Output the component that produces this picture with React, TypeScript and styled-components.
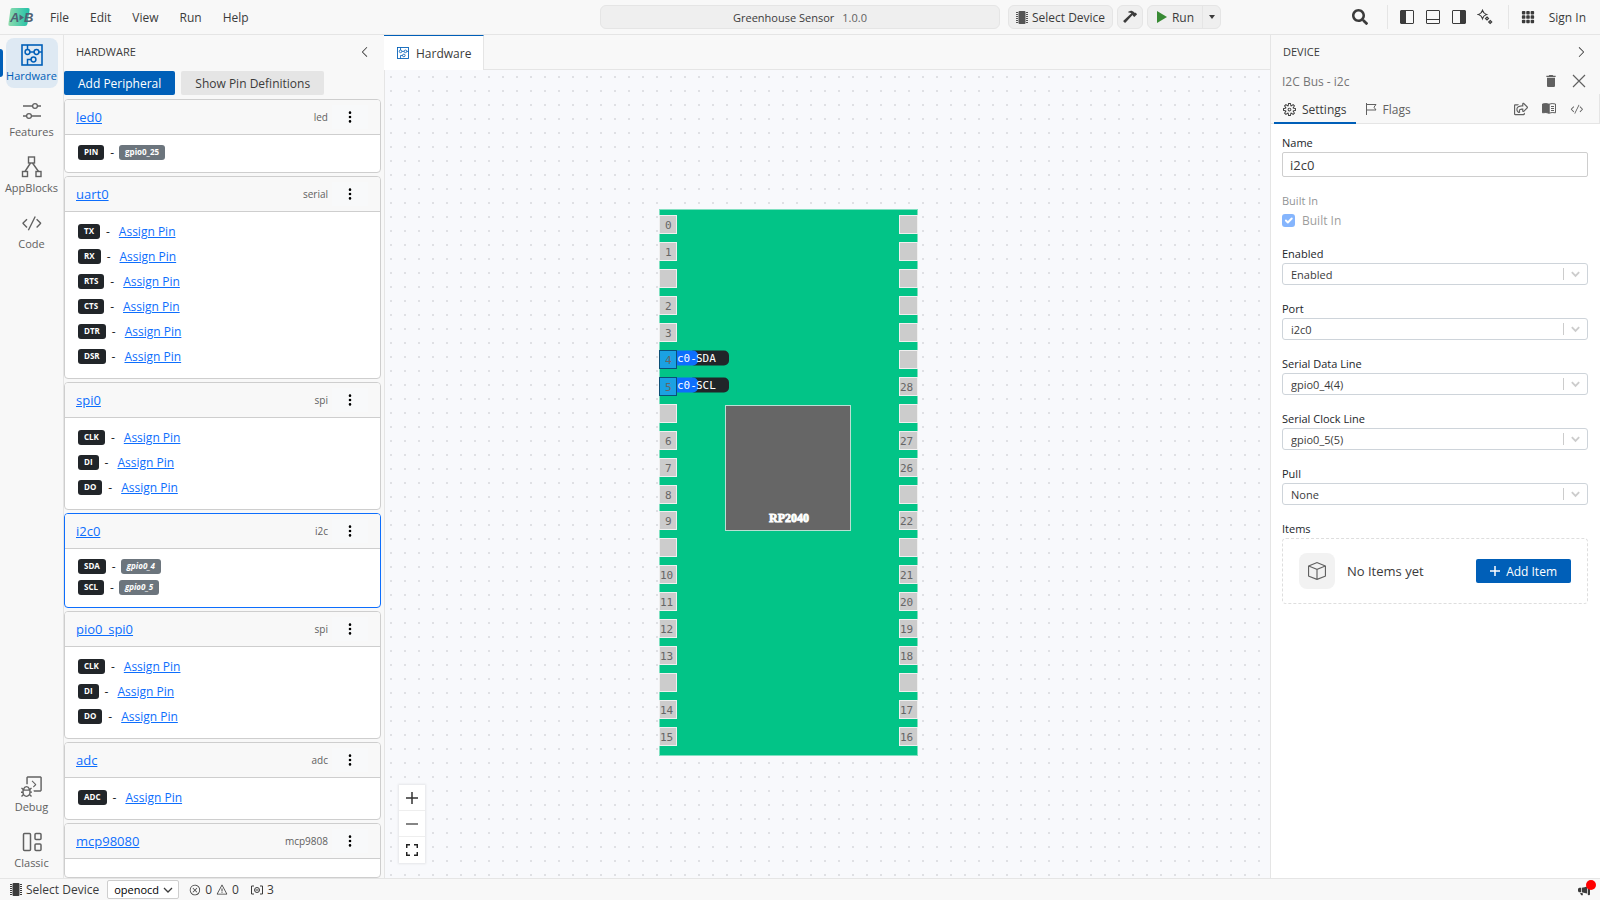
import React from "react";
import styled, { createGlobalStyle, css } from "styled-components";
import {
  VscLayoutSidebarLeft,
  VscLayoutSidebarRight,
  VscChevronLeft,
  VscChevronRight,
  VscCode,
  VscSettingsGear,
  VscError,
  VscWarning,
  VscDebugConsole,
} from "react-icons/vsc";
import { FaSearch, FaRegShareSquare } from "react-icons/fa";
import { BsHammer, BsThreeDotsVertical, BsGrid3X3GapFill, BsBox, BsMegaphoneFill } from "react-icons/bs";
import { MdDelete } from "react-icons/md";

const c = {
  chrome: "#f8f8f8",
  line: "#e5e5e5",
  text: "#3b3b3b",
  muted: "#616161",
  accent: "#005fb8",
  link: "#0d6efd",
  card: "#cecece",
};

const Global = createGlobalStyle`
  * { box-sizing: border-box; }
  html, body { margin: 0; height: 100%; }
  body { font-family: "Open Sans", "Noto Sans", sans-serif; font-size: 12px; color: ${c.text}; overflow: hidden; }
  button, input, select { font: inherit; color: inherit; margin: 0; }
  svg { display: block; flex: none; }
`;

const Page = styled.div`
  height: 100vh;
  display: grid;
  grid-template-rows: 35px minmax(0, 1fr) 22px;
  background: ${c.chrome};
`;

const PlainButton = styled.button`
  border: 0;
  background: none;
  padding: 0;
  display: flex;
  align-items: center;
  justify-content: center;
  white-space: nowrap;
`;

/* top bar */
const TopBar = styled.header`
  display: grid;
  grid-template-columns: 1fr 25% 1fr;
  align-items: center;
  border-bottom: 1px solid ${c.line};
`;
const TopSide = styled.div`
  display: flex;
  align-items: center;
  height: 24px;
`;
const Logo = styled.svg`
  margin-left: 8px;
  margin-right: 6px;
`;
const MenuButton = styled(PlainButton)`
  padding: 0 10px;
  margin-right: 1px;
  height: 24px;
`;
const TitleBox = styled.button`
  height: 24px;
  border: 1px solid ${c.line};
  border-radius: 6px;
  background: #efefef;
  display: flex;
  align-items: center;
  justify-content: center;
  gap: 8px;
  padding: 0 8px;
  font-size: 11px;
  span {
    color: ${c.muted};
  }
`;
const ToolGroup = styled.div`
  display: flex;
  height: 24px;
  margin-left: 8px;
  border: 1px solid ${c.line};
  border-radius: 6px;
  background: #efefef;
  & + & {
    margin-left: 4px;
  }
`;
const ToolButton = styled(PlainButton)<{ $w: number; $divided?: boolean }>`
  width: ${(p) => p.$w}px;
  gap: 4px;
  ${(p) =>
    p.$divided &&
    css`
      border-left: 1px solid ${c.line};
    `}
`;
const FlippedHammer = styled(BsHammer)`
  transform: scaleX(-1);
`;
const Spacer = styled.div`
  flex: 1;
`;
const IconButton = styled(PlainButton)`
  width: 26px;
  height: 24px;
`;
const SearchButton = styled(IconButton)`
  margin-right: 4px;
`;
const TopDivider = styled.span`
  width: 1px;
  height: 24px;
  background: ${c.line};
  margin: 0 6px 0 10px;
`;
const SignIn = styled(PlainButton)`
  padding: 0 14px 0 8px;
`;

/* workspace */
const Workspace = styled.div`
  display: grid;
  grid-template-columns: 64px 320px minmax(0, 1fr) 330px;
  min-height: 0;
`;
const Activity = styled.nav`
  display: flex;
  flex-direction: column;
  align-items: center;
  gap: 6px;
  padding: 3px 0;
  border-right: 1px solid ${c.line};
`;
const ActivityItem = styled(PlainButton)<{ $active?: boolean }>`
  position: relative;
  width: 52px;
  height: 50px;
  flex-direction: column;
  justify-content: flex-start;
  padding-top: 6px;
  gap: 1px;
  font-size: 11px;
  line-height: 18px;
  border-radius: 8px;
  color: ${c.muted};
  ${(p) =>
    p.$active &&
    css`
      color: ${c.accent};
      background: #dee9f3;
      &::before {
        content: "";
        position: absolute;
        left: -6px;
        top: 11px;
        width: 3px;
        height: 28px;
        border-radius: 0 3px 3px 0;
        background: ${c.accent};
      }
    `}
`;

const Side = styled.section`
  display: flex;
  flex-direction: column;
  min-height: 0;
`;
const PanelTitle = styled.h2`
  margin: 0;
  display: flex;
  align-items: center;
  justify-content: space-between;
  height: 35px;
  padding: 0 11px 2px 12px;
  font-size: 11px;
  font-weight: 400;
`;
const ButtonRow = styled.div`
  display: flex;
  gap: 6px;
  padding-top: 1px;
  margin-bottom: 4px;
`;
const Action = styled.button<{ $primary?: boolean }>`
  height: 24px;
  border: 0;
  border-radius: 2px;
  padding: 0 14px;
  display: flex;
  align-items: center;
  justify-content: center;
  gap: 6px;
  white-space: nowrap;
  font-size: 12px;
  background: ${(p) => (p.$primary ? c.accent : "#e5e5e5")};
  color: ${(p) => (p.$primary ? "#fff" : c.text)};
`;
const CardList = styled.div`
  flex: 1;
  min-height: 0;
  overflow: hidden;
  display: flex;
  flex-direction: column;
  gap: 3px;
  padding-right: 3px;
`;
const Card = styled.article<{ $selected?: boolean; $last?: boolean }>`
  border: 1px solid ${(p) => (p.$selected ? c.link : c.card)};
  border-radius: 4px;
  background: #fff;
  overflow: hidden;
  flex: ${(p) => (p.$last ? "1 1 0" : "none")};
`;
const CardHead = styled.div`
  display: flex;
  align-items: center;
  height: 35px;
  padding: 0 12px 0 11px;
  background: ${c.chrome};
  border-bottom: 1px solid ${c.card};
`;
const Name = styled.a`
  flex: 1;
  font-size: 13px;
  color: ${c.link};
`;
const Kind = styled.span`
  font-size: 10px;
  color: ${c.muted};
`;
const Kebab = styled(PlainButton)`
  width: 36px;
  height: 24px;
  margin-left: 4px;
  background: #f8f9fa;
  color: #000;
`;
const PinList = styled.ul`
  list-style: none;
  margin: 0;
  padding: 7px 13px 10px;
  display: grid;
  gap: 1px;
`;
const PinRow = styled.li<{ $assigned: boolean }>`
  display: flex;
  align-items: center;
  height: ${(p) => (p.$assigned ? 20 : 24)}px;
  gap: 5px;
  color: #212529;
`;
const Badge = styled.span<{ $tone: "dark" | "grey"; $italic?: boolean }>`
  height: 15px;
  line-height: 14px;
  padding: 0 6px;
  border-radius: 3px;
  font-size: 8px;
  font-weight: 700;
  font-style: ${(p) => (p.$italic ? "italic" : "normal")};
  color: #fff;
  background: ${(p) => (p.$tone === "dark" ? "#212529" : "#6c757d")};
`;
const Dash = styled.span`
  margin-left: 1px;
`;
const AssignLink = styled.a`
  margin-left: 4px;
  font-size: 12px;
  color: ${c.link};
`;

/* editor */
const Editor = styled.main`
  display: flex;
  flex-direction: column;
  min-width: 0;
`;
const TabBar = styled.div`
  display: flex;
  height: 35px;
  border-bottom: 1px solid ${c.line};
`;
const Tab = styled.button`
  display: flex;
  align-items: center;
  gap: 7px;
  height: 35px;
  padding: 0 12px 0 13px;
  border: 0;
  border-top: 1px solid ${c.accent};
  border-right: 1px solid ${c.line};
  background: #fff;
  font-size: 12px;
  color: ${c.text};
  svg {
    color: ${c.accent};
  }
`;
const Canvas = styled.div`
  position: relative;
  flex: 1;
  overflow: hidden;
  border-left: 1px solid ${c.line};
  background-color: #f8f9fc;
  background-image: radial-gradient(circle, #dfe0e4 1px, transparent 1px);
  background-size: 14px 14px;
  background-position: -1px 0;
`;
const Board = styled.svg`
  position: absolute;
  left: 274px;
  top: 139px;
`;
const ZoomBar = styled.div`
  position: absolute;
  left: 14px;
  bottom: 15px;
  display: grid;
  background: #fff;
  box-shadow: 0 0 2px 1px rgba(0, 0, 0, 0.08);
`;
const ZoomButton = styled(PlainButton)`
  width: 26px;
  height: 26px;
  border-bottom: 1px solid #eee;
  &:last-child {
    border-bottom: 0;
  }
`;

/* device panel */
const Device = styled.aside`
  border-left: 1px solid ${c.line};
  background: #fff;
`;
const DeviceTop = styled.div`
  background: ${c.chrome};
  border-bottom: 1px solid ${c.line};
`;
const DeviceLine = styled.div`
  display: flex;
  align-items: center;
  height: 24px;
  padding: 0 7px 2px 11px;
  color: #767676;
`;
const DeviceTabs = styled.div`
  display: flex;
  height: 29px;
  padding: 0 8px 0 3px;
  border-right: 1px solid ${c.line};
`;
const DeviceTab = styled(PlainButton)<{ $active?: boolean }>`
  height: 30px;
  gap: 6px;
  padding: 2px 9px 0;
  color: ${(p) => (p.$active ? c.text : c.muted)};
  border-bottom: 2px solid ${(p) => (p.$active ? c.accent : "transparent")};
`;
const SmallIcon = styled(PlainButton)`
  width: 28px;
  height: 29px;
  color: ${c.muted};
`;
const Form = styled.form`
  padding: 10px 12px 10px 11px;
  display: grid;
  gap: 15px;
`;
const Field = styled.div<{ $disabled?: boolean }>`
  display: grid;
  opacity: ${(p) => (p.$disabled ? 0.5 : 1)};
`;
const label = css`
  font-size: 11px;
  line-height: 18px;
  color: #212529;
`;
const Label = styled.label`
  ${label}
`;
const GroupTitle = styled.span`
  ${label}
`;
const TextInput = styled.input`
  height: 25px;
  border: 1px solid ${c.card};
  border-radius: 2px;
  padding: 0 7px;
  background: #fff;
  font-size: 13px;
  width: 100%;
`;
const CheckLine = styled.label`
  display: flex;
  align-items: center;
  gap: 7px;
  height: 20px;
  font-size: 12px;
`;
const Check = styled.input`
  appearance: none;
  width: 13px;
  height: 13px;
  border-radius: 3px;
  background: ${c.link}
    url("data:image/svg+xml,%3Csvg xmlns='http://www.w3.org/2000/svg' viewBox='0 0 20 20'%3E%3Cpath fill='none' stroke='%23fff' stroke-width='3' stroke-linecap='round' stroke-linejoin='round' d='m6 10 3 3 6-6'/%3E%3C/svg%3E");
`;
const SelectBox = styled.div`
  display: flex;
  align-items: center;
  height: 22px;
  border: 1px solid #ced4da;
  border-radius: 3px;
  background: #fff;
  padding-right: 6px;
  select {
    flex: 1;
    height: 20px;
    appearance: none;
    border: 0;
    background: none;
    padding: 0 8px;
    font-size: 11px;
    color: ${c.text};
  }
  svg {
    border-left: 1px solid #ccc;
    padding-left: 6px;
    color: #ccc;
  }
`;
const Empty = styled.div`
  display: flex;
  align-items: center;
  gap: 12px;
  height: 66px;
  padding: 0 16px;
  border: 1px dashed #dedede;
  border-radius: 4px;
  font-size: 13px;
  > span {
    flex: 1;
  }
`;
const Tile = styled.div`
  width: 36px;
  height: 36px;
  border-radius: 8px;
  background: #f2f2f2;
  color: ${c.muted};
  display: grid;
  place-items: center;
`;

/* status bar */
const StatusBar = styled.footer`
  display: flex;
  align-items: center;
  border-top: 1px solid ${c.line};
  padding: 0 8px;
`;
const StatusItem = styled(PlainButton)`
  gap: 4px;
  height: 20px;
  padding: 0 2px;
  & + & {
    margin-left: 8px;
  }
`;
const StatusSelect = styled.label`
  display: flex;
  align-items: center;
  height: 19px;
  margin: 0 8px 0 6px;
  padding-right: 5px;
  background: #fff;
  border: 1px solid ${c.card};
  border-radius: 2px;
  select {
    appearance: none;
    border: 0;
    background: none;
    padding: 0 0 0 6px;
    width: 55px;
    height: 17px;
    font-size: 11px;
    color: #000;
  }
`;
const Announce = styled(PlainButton)`
  position: relative;
  margin-left: auto;
  padding: 0 2px;
  height: 20px;
  &::after {
    content: "";
    position: absolute;
    right: -4px;
    top: 0;
    width: 10px;
    height: 10px;
    border-radius: 50%;
    background: #f00;
  }
`;

const ChipIcon = ({ color = c.text }: { color?: string }) => (
  <svg width="12" height="13" viewBox="0 0 12 13" fill={color}>
    <rect x="2.5" y="0" width="7" height="13" rx="1" />
    {[1, 3, 5, 7, 9, 11].map((y) => (
      <path key={y} d={`M0 ${y}h2v1H0zM10 ${y}h2v1h-2z`} />
    ))}
  </svg>
);
const CircuitIcon = ({ size }: { size: number }) => (
  <svg width={size} height={size} viewBox="0 0 22 22" fill="none" stroke="currentColor" strokeWidth="1.5">
    <rect x="1" y="1" width="20" height="20" strokeWidth="1.6" />
    <circle cx="6.5" cy="8" r="2.4" />
    <circle cx="15.5" cy="8" r="2.4" />
    <circle cx="12.5" cy="15.5" r="2.4" />
    <path d="M9 8h4M6.5 1v4.6M10 15.5H6.5V21M17.9 8H21" />
  </svg>
);
const SlidersIcon = () => (
  <svg width="22" height="22" viewBox="0 0 22 22" fill="none" stroke="currentColor" strokeWidth="1.3">
    <circle cx="14" cy="6" r="2.4" />
    <circle cx="8" cy="16" r="2.4" />
    <path d="M2 6h9.600M16.400 6H20M2 16h3.600M10.400 16H20" />
  </svg>
);
const BlocksIcon = () => (
  <svg width="22" height="22" viewBox="0 0 22 22" fill="none" stroke="currentColor" strokeWidth="1.4">
    <rect x="7.500" y="1" width="6" height="6" />
    <rect x="1.500" y="15.500" width="5" height="5" />
    <rect x="15" y="15.500" width="5" height="5" />
    <path d="M9.500 7 4 15.500M11.500 7l6 8.500" />
  </svg>
);
const ClassicIcon = () => (
  <svg width="22" height="22" viewBox="0 0 22 22" fill="none" stroke="currentColor" strokeWidth="1.5">
    <rect x="2.500" y="2.500" width="7" height="17" rx="1" />
    <rect x="14" y="2.500" width="6" height="6" rx="1" />
    <rect x="14" y="13" width="6" height="6.500" rx="1" />
  </svg>
);
const PanelIcon = () => (
  <svg width="16" height="16" viewBox="0 0 16 16" fill="none" stroke="currentColor">
    <rect x="1.500" y="1.500" width="13" height="13" rx="0.500" />
    <path d="M1.500 10.500h13" />
  </svg>
);
const SparkIcon = () => (
  <svg width="16" height="16" viewBox="0 0 16 16" fill="none" stroke="currentColor" strokeWidth="1.2">
    <path d="M5.500 1.500Q6.500 4.500 9.500 5.500 6.500 6.500 5.500 9.500 4.500 6.500 1.500 5.500 4.500 4.500 5.500 1.500zM10 8l1.500 1.500L10 11 8.500 9.500zM13.200 11.500l1.500 1.500-1.500 1.500-1.500-1.500z" />
  </svg>
);
const BookIcon = () => (
  <svg width="14" height="11" viewBox="0 0 14 11" fill="none" stroke="currentColor">
    <path d="M.500 1Q4 0 7 1.200V10.200Q4 9 .500 9.800z" fill="currentColor" />
    <path d="M7 1.200Q10 0 13.500 1V9.800Q10 9 7 10.200zM9 3.500h3M9 5.500h3M9 7.500h3" />
  </svg>
);
const FlagIcon = () => (
  <svg width="12" height="12" viewBox="0 0 12 12" fill="none" stroke="currentColor">
    <path d="M1.500 0v12M1.500 1.500H11L9 4.200l2 2.800H1.500" />
  </svg>
);
const CrossIcon = () => (
  <svg width="14" height="14" viewBox="0 0 14 14" stroke="currentColor" strokeWidth="1.200">
    <path d="M1 1l12 12M13 1L1 13" />
  </svg>
);
const SelectCaret = () => (
  <svg width="18" height="12" viewBox="0 0 12 12" fill="none" stroke="currentColor" strokeWidth="2">
    <path d="M2 4l4 4 4-4" />
  </svg>
);
const SmallCaret = () => (
  <svg width="10" height="10" viewBox="0 0 10 10" fill="none" stroke="currentColor" strokeWidth="1.300">
    <path d="M1 3l4 4 4-4" />
  </svg>
);
const TargetIcon = () => (
  <svg width="12" height="10" viewBox="0 0 12 10" fill="none" stroke="currentColor">
    <path d="M3 1H.500v8H3M9 1h2.500v8H9" />
    <circle cx="6" cy="5" r="2.500" />
    <path d="M4.500 5h3" />
  </svg>
);

type PinDef = [string, string?, boolean?];
const cards: { name: string; kind: string; pins: PinDef[]; selected?: boolean }[] = [
  { name: "led0", kind: "led", pins: [["PIN", "gpio0_25"]] },
  { name: "uart0", kind: "serial", pins: [["TX"], ["RX"], ["RTS"], ["CTS"], ["DTR"], ["DSR"]] },
  { name: "spi0", kind: "spi", pins: [["CLK"], ["DI"], ["DO"]] },
  { name: "i2c0", kind: "i2c", pins: [["SDA", "gpio0_4", true], ["SCL", "gpio0_5", true]], selected: true },
  { name: "pio0_spi0", kind: "spi", pins: [["CLK"], ["DI"], ["DO"]] },
  { name: "adc", kind: "adc", pins: [["ADC"]] },
  { name: "mcp98080", kind: "mcp9808", pins: [] },
];

const leftPins = ["0", "1", "", "2", "3", "4", "5", "", "6", "7", "8", "9", "", "10", "11", "12", "13", "", "14", "15"];
const rightPins = ["", "", "", "", "", "", "28", "", "27", "26", "", "22", "", "21", "20", "19", "18", "", "17", "16"];
const signals: Record<string, string> = { "4": "SDA", "5": "SCL" };
const mono = '"DejaVu Sans Mono", monospace';
const pinTop = (i: number) => Math.round(i * 26.95) + 6.5;

const BoardDrawing = () => (
  <Board width="259" height="548" viewBox="0 0 259 548" fontFamily={mono} fontSize="11">
    <rect x="0.5" y="0.5" width="258" height="546" fill="#02c487" stroke="#7fe0c0" />
    {leftPins.map((pin, i) => {
      const y = pinTop(i);
      const signal = signals[pin];
      return (
        <g key={i}>
          {signal && (
            <>
              <rect x="30" y={y} width="40" height="15" rx="5" fill="#212529" />
              <rect x="10" y={y} width="29" height="15" rx="5" fill="#0d6efd" />
              <text x="18" y={y + 11} fill="#fff">c0-</text>
              <text x="37" y={y + 11} fill="#fff">{signal}</text>
            </>
          )}
          <rect
            x="0.5"
            y={y}
            width="17"
            height="18"
            fill={signal ? "#1ba1e2" : "#ccc"}
            stroke={signal ? "#0b4f77" : "#f0f0f0"}
          />
          <text x={pin.length > 1 ? 1 : 6} y={y + 13.5} fill="#666">{pin}</text>
        </g>
      );
    })}
    {rightPins.map((pin, i) => (
      <g key={i}>
        <rect x="240.5" y={pinTop(i)} width="18" height="18" fill="#ccc" stroke="#f0f0f0" />
        <text x="241" y={pinTop(i) + 13.5} fill="#666">{pin}</text>
      </g>
    ))}
    <rect x="66.5" y="196.5" width="125" height="125" fill="#666" stroke="#b9e0d4" />
    <text
      x="130"
      y="313"
      textAnchor="middle"
      fontFamily='"Liberation Serif", serif'
      fontSize="12"
      fontWeight="700"
      fill="#fff"
      stroke="#fff"
      strokeWidth="0.8"
    >
      RP2040
    </text>
  </Board>
);

const SelectField = ({ id, title, value }: { id: string; title: string; value: string }) => (
  <Field>
    <Label htmlFor={id}>{title}</Label>
    <SelectBox>
      <select id={id} defaultValue={value}>
        <option>{value}</option>
      </select>
      <SelectCaret />
    </SelectBox>
  </Field>
);

export default function App() {
  return (
    <Page>
      <Global />
      <TopBar>
        <TopSide>
          <Logo width="26" height="18" viewBox="0 0 26 18">
            <defs>
              <linearGradient id="brand">
                <stop offset="0" stopColor="#8fdcae" />
                <stop offset="1" stopColor="#1fc0a8" />
              </linearGradient>
            </defs>
            <path d="M4 0h16q2 0 1.600 2l-2.200 14q-.4 2-2.400 2H2q-2 0-1.600-2L2.400 2Q2.700 0 4 0z" fill="url(#brand)" />
            <g fontFamily='"Liberation Sans", sans-serif' fontSize="13" fontWeight="700" fontStyle="italic" fill="#4f6274">
              <text x="2" y="14">A</text>
              <text x="16" y="14">B</text>
            </g>
            <path d="M11.500 6.500l4.500 3-4.500 3z" fill="#4f6274" />
          </Logo>
          {["File", "Edit", "View", "Run", "Help"].map((m) => (
            <MenuButton key={m}>{m}</MenuButton>
          ))}
        </TopSide>
        <TitleBox>
          Greenhouse Sensor <span>1.0.0</span>
        </TitleBox>
        <TopSide>
          <ToolGroup>
            <ToolButton $w={103}>
              <ChipIcon color="#555" />
              Select Device
            </ToolButton>
          </ToolGroup>
          <ToolGroup>
            <ToolButton $w={24} aria-label="Build">
              <FlippedHammer size={14} />
            </ToolButton>
          </ToolGroup>
          <ToolGroup>
            <ToolButton $w={54}>
              <svg width="12" height="14" viewBox="0 0 12 14">
                <path d="M1 1l10 6-10 6z" fill="#388a34" />
              </svg>
              Run
            </ToolButton>
            <ToolButton $w={18} $divided aria-label="Run options">
              <svg width="6" height="4" viewBox="0 0 6 4">
                <path d="M0 0h6L3 4z" fill={c.text} />
              </svg>
            </ToolButton>
          </ToolGroup>
          <Spacer />
          <SearchButton aria-label="Search">
            <FaSearch size={16} />
          </SearchButton>
          <TopDivider />
          <IconButton aria-label="Toggle left sidebar">
            <VscLayoutSidebarLeft size={16} />
          </IconButton>
          <IconButton aria-label="Toggle bottom panel">
            <PanelIcon />
          </IconButton>
          <IconButton aria-label="Toggle right sidebar">
            <VscLayoutSidebarRight size={16} />
          </IconButton>
          <IconButton aria-label="Assistant">
            <SparkIcon />
          </IconButton>
          <TopDivider />
          <IconButton aria-label="Apps">
            <BsGrid3X3GapFill size={14} />
          </IconButton>
          <SignIn>Sign In</SignIn>
        </TopSide>
      </TopBar>

      <Workspace>
        <Activity>
          <ActivityItem $active>
            <CircuitIcon size={22} />
            Hardware
          </ActivityItem>
          <ActivityItem>
            <SlidersIcon />
            Features
          </ActivityItem>
          <ActivityItem>
            <BlocksIcon />
            AppBlocks
          </ActivityItem>
          <ActivityItem>
            <VscCode size={22} />
            Code
          </ActivityItem>
          <Spacer />
          <ActivityItem>
            <VscDebugConsole size={22} />
            Debug
          </ActivityItem>
          <ActivityItem>
            <ClassicIcon />
            Classic
          </ActivityItem>
        </Activity>

        <Side>
          <PanelTitle>
            HARDWARE
            <VscChevronLeft size={16} />
          </PanelTitle>
          <ButtonRow>
            <Action $primary>Add Peripheral</Action>
            <Action>Show Pin Definitions</Action>
          </ButtonRow>
          <CardList>
            {cards.map((card, i) => (
              <Card key={card.name} $selected={card.selected} $last={i === cards.length - 1}>
                <CardHead>
                  <Name href="#">{card.name}</Name>
                  <Kind>{card.kind}</Kind>
                  <Kebab aria-label={`${card.name} options`}>
                    <BsThreeDotsVertical size={14} />
                  </Kebab>
                </CardHead>
                <PinList>
                  {card.pins.map(([signal, gpio, italic]) => (
                    <PinRow key={signal} $assigned={!!gpio}>
                      <Badge $tone="dark">{signal}</Badge>
                      <Dash>-</Dash>
                      {gpio ? (
                        <Badge $tone="grey" $italic={italic}>
                          {gpio}
                        </Badge>
                      ) : (
                        <AssignLink href="#">Assign Pin</AssignLink>
                      )}
                    </PinRow>
                  ))}
                </PinList>
              </Card>
            ))}
          </CardList>
        </Side>

        <Editor>
          <TabBar>
            <Tab>
              <CircuitIcon size={12} />
              Hardware
            </Tab>
          </TabBar>
          <Canvas>
            <BoardDrawing />
            <ZoomBar>
              <ZoomButton aria-label="Zoom in">
                <svg width="12" height="12" viewBox="0 0 12 12" stroke="#333" strokeWidth="1.500">
                  <path d="M6 0v12M0 6h12" />
                </svg>
              </ZoomButton>
              <ZoomButton aria-label="Zoom out">
                <svg width="12" height="12" viewBox="0 0 12 12" stroke="#333" strokeWidth="1.200">
                  <path d="M0 6h12" />
                </svg>
              </ZoomButton>
              <ZoomButton aria-label="Fit view">
                <svg width="12" height="12" viewBox="0 0 12 12" fill="none" stroke="#222" strokeWidth="1.500">
                  <path d="M.700 4V.700H4M8 .700h3.300V4M11.300 8v3.300H8M4 11.300H.700V8" />
                </svg>
              </ZoomButton>
            </ZoomBar>
          </Canvas>
        </Editor>

        <Device>
          <DeviceTop>
            <PanelTitle>
              DEVICE
              <VscChevronRight size={16} />
            </PanelTitle>
            <DeviceLine>
              I2C Bus - i2c
              <Spacer />
              <SmallIcon aria-label="Delete">
                <MdDelete size={16} />
              </SmallIcon>
              <SmallIcon aria-label="Close">
                <CrossIcon />
              </SmallIcon>
            </DeviceLine>
            <DeviceTabs>
              <DeviceTab $active>
                <VscSettingsGear size={13} />
                Settings
              </DeviceTab>
              <DeviceTab>
                <FlagIcon />
                Flags
              </DeviceTab>
              <Spacer />
              <SmallIcon aria-label="Share">
                <FaRegShareSquare size={14} />
              </SmallIcon>
              <SmallIcon aria-label="Documentation">
                <BookIcon />
              </SmallIcon>
              <SmallIcon aria-label="Source">
                <VscCode size={14} />
              </SmallIcon>
            </DeviceTabs>
          </DeviceTop>
          <Form>
            <Field>
              <Label htmlFor="name">Name</Label>
              <TextInput id="name" defaultValue="i2c0" />
            </Field>
            <Field $disabled>
              <GroupTitle>Built In</GroupTitle>
              <CheckLine>
                <Check type="checkbox" defaultChecked disabled />
                Built In
              </CheckLine>
            </Field>
            <SelectField id="enabled" title="Enabled" value="Enabled" />
            <SelectField id="port" title="Port" value="i2c0" />
            <SelectField id="sda" title="Serial Data Line" value="gpio0_4(4)" />
            <SelectField id="scl" title="Serial Clock Line" value="gpio0_5(5)" />
            <SelectField id="pull" title="Pull" value="None" />
            <Field>
              <GroupTitle>Items</GroupTitle>
              <Empty>
                <Tile>
                  <BsBox size={18} />
                </Tile>
                <span>No Items yet</span>
                <Action $primary type="button">
                  <svg width="10" height="10" viewBox="0 0 10 10" stroke="#fff" strokeWidth="1.500">
                    <path d="M5 0v10M0 5h10" />
                  </svg>
                  Add Item
                </Action>
              </Empty>
            </Field>
          </Form>
        </Device>
      </Workspace>

      <StatusBar>
        <StatusItem>
          <ChipIcon />
          Select Device
        </StatusItem>
        <StatusSelect>
          <select aria-label="Debugger" defaultValue="openocd">
            <option>openocd</option>
          </select>
          <SmallCaret />
        </StatusSelect>
        <StatusItem>
          <VscError size={12} />
          <span>0</span>
          <VscWarning size={12} />
          <span>0</span>
        </StatusItem>
        <StatusItem>
          <TargetIcon />
          <span>3</span>
        </StatusItem>
        <Announce aria-label="Announcements">
          <BsMegaphoneFill size={12} />
        </Announce>
      </StatusBar>
    </Page>
  );
}
